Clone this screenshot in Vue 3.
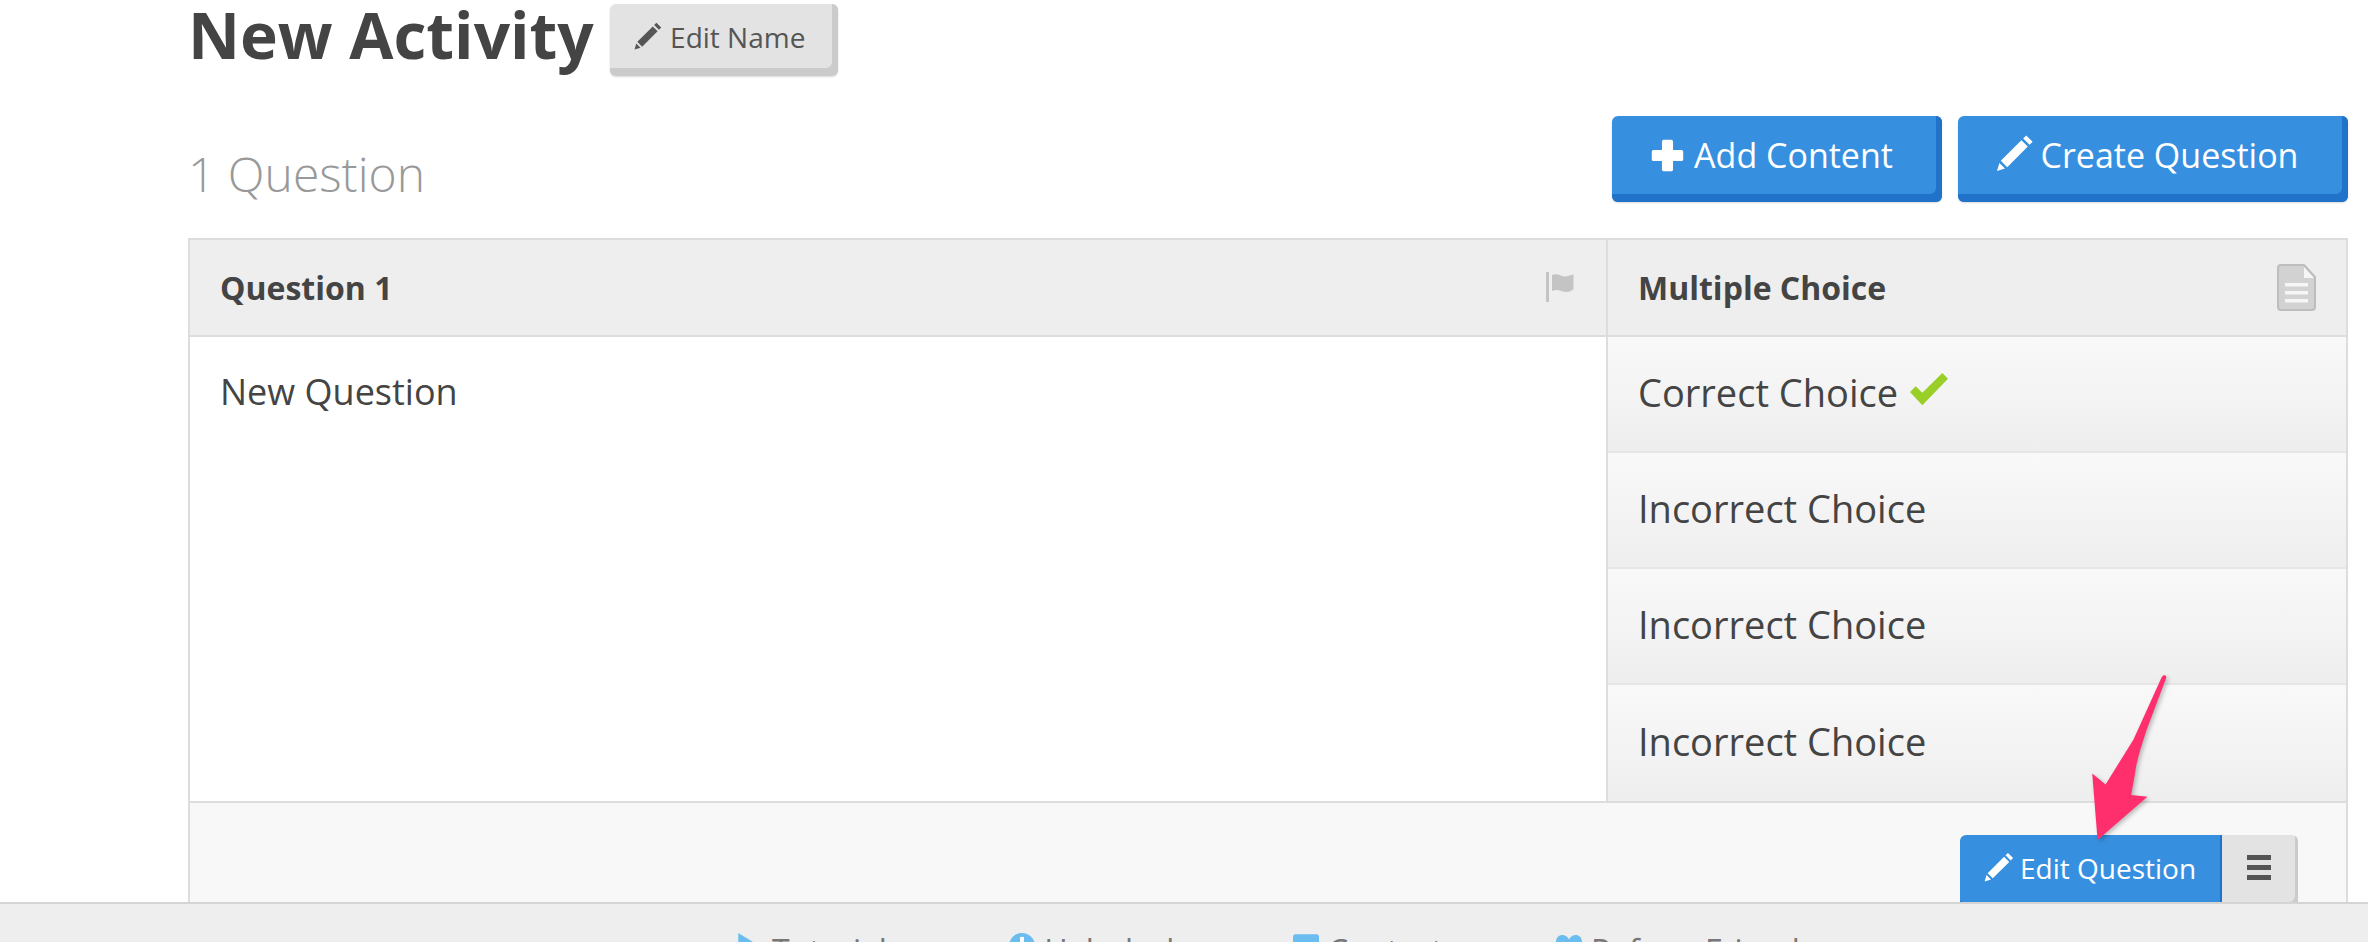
<script setup>
const choices = [
  { text: 'Correct Choice', correct: true },
  { text: 'Incorrect Choice', correct: false },
  { text: 'Incorrect Choice', correct: false },
  { text: 'Incorrect Choice', correct: false },
]
const pencil = 'M15.6 1.2 18.8 4.4 17.3 5.9 14.1 2.7ZM13.2 3.6 16.4 6.8 6.1 17.1 2.9 13.9ZM2.2 15 5 17.8 1 19Z'
const links = ['Tutorials', 'Helpdesk', 'Contact', 'Refer a Friend']
</script>

<template>
  <div class="page">
    <main class="content">
      <div class="title-row">
        <h1>New Activity</h1>
        <button class="btn grey name-btn">
          <svg viewBox="0 0 20 20" class="ic"><path :d="pencil" /></svg>Edit Name
        </button>
      </div>
      <div class="sub-row">
        <h2>1 Question</h2>
        <div class="actions">
          <button class="btn blue big">
            <svg viewBox="0 0 20 20" class="ic plus"><path d="M8 1.500h4a1 1 0 0 1 1 1V7h4.500a1 1 0 0 1 1 1v4a1 1 0 0 1-1 1H13v4.500a1 1 0 0 1-1 1H8a1 1 0 0 1-1-1V13H2.500a1 1 0 0 1-1-1V8a1 1 0 0 1 1-1H7V2.500a1 1 0 0 1 1-1z" /></svg>Add Content
          </button>
          <button class="btn blue big">
            <svg viewBox="0 0 20 20" class="ic pen-big"><path :d="pencil" /></svg>Create Question
          </button>
        </div>
      </div>
      <section class="card">
        <div class="grid">
          <div class="col-left">
            <div class="head">
              <strong>Question 1</strong>
              <svg viewBox="0 0 28 30" class="flag"><path d="M0 0h3v30H0zM6 3c6-3 10 3 16 1 2-.5 4-1 5.500-2v15c-2 2-4 3-7 3-5 0-9-4-14.500-1z" /></svg>
            </div>
            <div class="question">New Question</div>
          </div>
          <div class="col-right">
            <div class="head">
              <strong>Multiple Choice</strong>
              <svg viewBox="0 0 39 47" class="doc">
                <path d="M4 1h23l11 12v30a3 3 0 0 1-3 3H4a3 3 0 0 1-3-3V4a3 3 0 0 1 3-3z" fill="#d2d2d2" stroke="#bdbdbd" stroke-width="2" />
                <path d="M27 3v11h10z" fill="#f6f6f6" />
                <path d="M8 19h23v3.500H8zM8 27h23v3.500H8zM8 35h23v3.500H8z" fill="#f6f6f6" />
              </svg>
            </div>
            <div v-for="(c, i) in choices" :key="i" class="choice">
              {{ c.text }}
              <svg v-if="c.correct" viewBox="0 0 38 33" class="check"><path d="M0 19 12.300 32.300 38 5.700 32.300 0 12.300 19.700 5.700 13.300Z" /></svg>
            </div>
          </div>
        </div>
        <div class="card-foot">
          <div class="group">
            <button class="btn blue edit">
              <svg viewBox="0 0 20 20" class="ic"><path :d="pencil" /></svg>Edit Question
            </button>
            <button class="btn grey menu" aria-label="Menu"><span></span><span></span><span></span></button>
          </div>
        </div>
      </section>
    </main>
    <svg class="arrow" viewBox="0 0 230 505">
      <path d="M215 12C220 4 231 6 228 16L170 170C155 215 140 260 135 300L123 367 172 372 22 502 6 302 46 335C74 290 102 245 130 200Z" />
    </svg>
    <footer class="bar">
      <a v-for="(l, i) in links" :key="l" class="link">
        <svg v-if="i === 0" viewBox="0 0 20 20" class="fi"><path d="M1 0 19 11 1 20z" /></svg>
        <svg v-else-if="i === 1" viewBox="0 0 20 20" class="fi"><circle cx="10" cy="10" r="10" /><path d="M8.500 3h3v9h-3z" fill="#fff" /></svg>
        <svg v-else-if="i === 2" viewBox="0 0 20 20" class="fi"><rect x="0" y="1" width="20" height="18" rx="2" /></svg>
        <svg v-else viewBox="0 0 20 20" class="fi"><path d="M10 5C8 0 0 0 0 7c0 5 6 9 10 13 4-4 10-8 10-13 0-7-8-7-10-2z" /></svg>
        {{ l }}
      </a>
    </footer>
  </div>
</template>

<style>
html, body { margin: 0; overflow: hidden; background: #fff; }
</style>

<style scoped>
.page {
  position: relative;
  width: 2368px;
  height: 942px;
  overflow: hidden;
  font-family: "Open Sans", "Noto Sans", sans-serif;
  color: #444;
}
.content { padding: 0 20px 0 188px; }
.title-row { display: flex; align-items: flex-start; height: 116px; }
h1 { margin: 0; font-size: 64px; line-height: 70px; font-weight: 700; color: #444; white-space: nowrap; }
.btn {
  font-family: inherit;
  border: 0;
  border-radius: 6px;
  display: inline-flex;
  align-items: center;
  justify-content: center;
  padding: 0;
  box-sizing: border-box;
}
.ic { fill: currentColor; flex: none; }
.grey { background: #e3e3e3; color: #555; box-shadow: inset -6px -8px 0 #cbcbcb, 0 1px 2px rgba(0,0,0,.15); }
.blue { background: #3790df; color: #fff; box-shadow: inset -6px -8px 0 #2173c9, 0 1px 2px rgba(0,0,0,.15); }
.name-btn { margin: 4px 0 0 16px; width: 228px; height: 72px; font-size: 28px; padding: 0 9px 6px 0; gap: 7px; }
.name-btn .ic { width: 30px; height: 30px; margin-top: -2px; }
.sub-row { display: flex; justify-content: space-between; align-items: flex-start; height: 122px; }
h2 { margin: 28px 0 0; font-size: 48px; line-height: 60px; font-weight: 300; color: #999; }
.actions { display: flex; gap: 16px; }
.big { height: 86px; font-size: 34px; padding: 0 12px 8px 0; }
.big:first-child { width: 330px; gap: 8px; }
.big:last-child { width: 390px; gap: 6px; padding-right: 13px; }
.plus { width: 37px; height: 37px; }
.pen-big { width: 40px; height: 40px; margin-top: -4px; }
.card { border: 2px solid #ddd; border-bottom: 0; background: #f8f8f8; height: 800px; box-sizing: border-box; }
.grid { display: grid; grid-template-columns: 1416px 1fr; border-bottom: 2px solid #ddd; background: #fff; }
.head {
  height: 94px;
  background: #eee;
  border-bottom: 2px solid #ddd;
  display: flex;
  justify-content: space-between;
  align-items: center;
  padding: 0 30px 1px;
  font-size: 32px;
}
.head strong { color: #444; font-weight: 700; }
.col-right { border-left: 2px solid #ddd; }
.col-left .head { padding-right: 32px; }
.flag { width: 28px; height: 30px; fill: #c4c4c4; }
.doc { width: 39px; height: 47px; }
.question { padding: 31px 30px; font-size: 36px; line-height: 48px; color: #444; }
.choice {
  height: 116px;
  box-sizing: border-box;
  border-bottom: 2px solid #e6e6e6;
  padding: 0 30px 4px;
  display: flex;
  align-items: center;
  gap: 12px;
  font-size: 38px;
  color: #444;
  background: linear-gradient(#f9f9f9, #eeeeee);
}
.choice:last-child { border-bottom: 0; }
.check { width: 38px; height: 33px; fill: #99cf26; margin-top: -6px; flex: none; }
.card-foot { display: flex; justify-content: flex-end; padding: 32px 48px 0 0; }
.group { display: flex; }
.edit { width: 262px; height: 72px; font-size: 28px; gap: 5px; border-radius: 6px 0 0 6px; justify-content: flex-start; padding: 0 0 6px 23px; box-shadow: inset -2px -5px 0 #2173c9; }
.edit .ic { width: 32px; height: 32px; margin-top: -2px; }
.menu { width: 76px; height: 72px; flex-direction: column; gap: 5px; border-radius: 0 6px 6px 0; padding: 0 2px 8px 0; box-shadow: inset -3px -5px 0 #cbcbcb; }
.menu span { display: block; width: 24px; height: 5px; background: #555; }
.arrow { position: absolute; left: 2090px; top: 673px; width: 77px; height: 168px; fill: #ff2f6d; filter: drop-shadow(2px 2px 2px rgba(0,0,0,.25)); }
.bar {
  position: absolute;
  left: 0;
  right: 0;
  top: 902px;
  height: 60px;
  box-sizing: border-box;
  background: #eee;
  border-top: 2px solid #d4d4d4;
  display: flex;
  justify-content: flex-start;
  gap: 107px;
  padding: 27px 0 0 737px;
  font-size: 32px;
  line-height: 40px;
  color: #777;
}
.link { display: flex; align-items: flex-start; gap: 9px; white-space: nowrap; }
.link:nth-child(3) { margin-left: 3px; }
.link:nth-child(4) { margin-left: 6px; }
.fi { width: 26px; height: 26px; fill: #6bbdf0; margin-top: 2px; }
</style>
